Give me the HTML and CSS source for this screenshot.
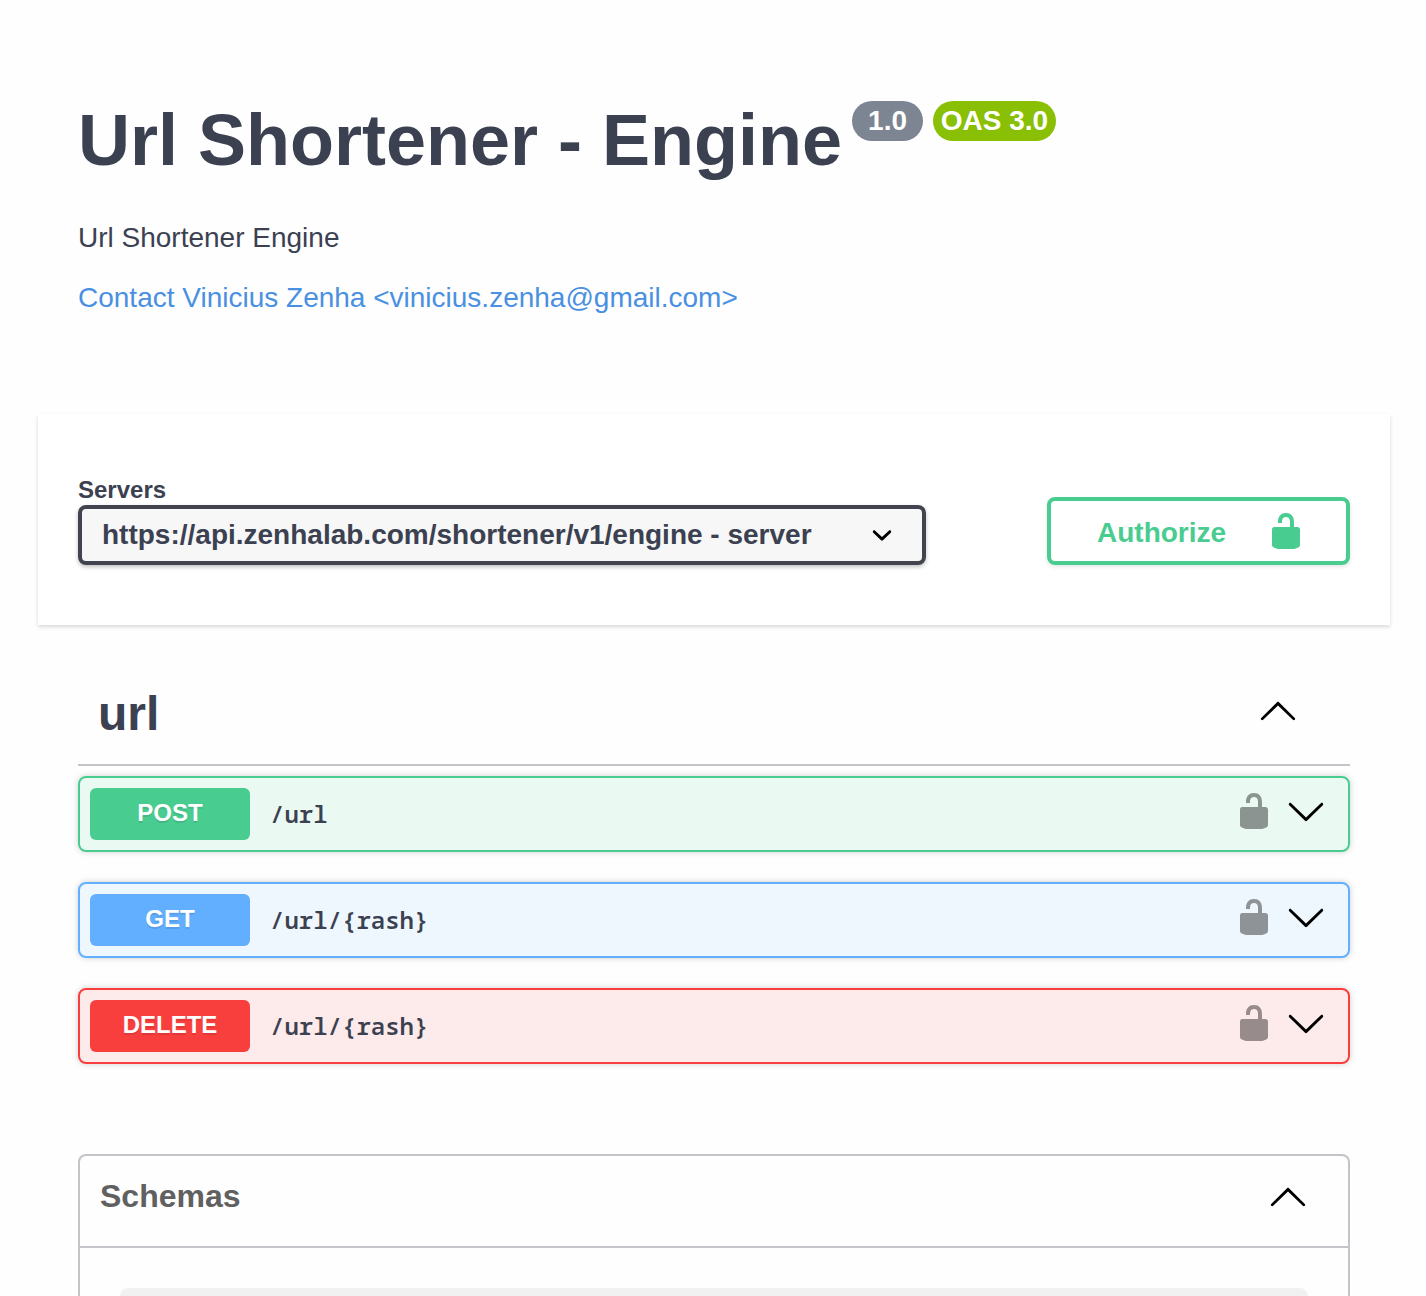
FILE: index.html
```html
<!DOCTYPE html>
<html lang="en">
<head>
<meta charset="utf-8">
<title>Url Shortener - Engine</title>
<link rel="stylesheet" href="styles.css">
</head>
<body>
<svg class="sprite" aria-hidden="true">
  <symbol id="unlocked" viewBox="0 0 20 20"><path d="M15.8 8H14V5.6C14 2.703 12.665 1 10 1 7.334 1 6 2.703 6 5.6V6h2v-.801C8 3.754 8.797 3 10 3c1.203 0 2 .754 2 2.199V8H4c-.553 0-1 .646-1 1.199V17c0 .549.428 1.139.951 1.307l1.197.387C5.672 18.861 6.55 19 7.1 19h5.8c.549 0 1.428-.139 1.951-.307l1.196-.387c.524-.167.953-.757.953-1.306V9.199C17 8.646 16.352 8 15.8 8z"/></symbol>
  <symbol id="arrow-down" viewBox="0 0 20 20"><path d="M17.418 6.109c.272-.268.709-.268.979 0s.271.701 0 .969l-7.908 7.83c-.27.268-.707.268-.979 0l-7.908-7.83c-.27-.268-.27-.701 0-.969.271-.268.709-.268.979 0L10 13.25l7.418-7.141z"/></symbol>
  <symbol id="arrow-up" viewBox="0 0 20 20"><path d="M17.418 14.908c.272.268.709.268.979 0s.271-.701 0-.969l-7.908-7.83c-.27-.268-.707-.268-.979 0l-7.908 7.83c-.27.268-.27.701 0 .969.271.268.709.268.979 0L10 7.767l7.418 7.141z"/></symbol>
  <symbol id="select-arrow" viewBox="0 0 20 20"><path d="M13.418 7.859c.271-.268.709-.268.978 0 .27.268.272.701 0 .969l-3.908 3.83c-.27.268-.707.268-.979 0l-3.908-3.83c-.27-.267-.27-.701 0-.969.271-.268.709-.268.978 0L10 11l3.418-3.141z"/></symbol>
</svg>
<main class="page">
  <header class="info">
    <div class="title-row">
      <h1 class="title">Url Shortener - Engine</h1>
      <span class="badge">1.0</span>
      <span class="badge badge-oas">OAS 3.0</span>
    </div>
    <p class="description">Url Shortener Engine</p>
    <a class="contact">Contact Vinicius Zenha &lt;vinicius.zenha@gmail.com&gt;</a>
  </header>

  <section class="scheme">
    <div class="servers">
      <span class="servers-label">Servers</span>
      <div class="select">
        <span>https://api.zenhalab.com/shortener/v1/engine - server</span>
        <svg class="icon"><use href="#select-arrow"/></svg>
      </div>
    </div>
    <button class="authorize"><span class="authorize-label">Authorize</span><svg class="icon"><use href="#unlocked"/></svg></button>
  </section>

  <section class="operations">
    <div class="tag">
      <h3 class="tag-name">url</h3>
      <svg class="icon"><use href="#arrow-up"/></svg>
    </div>
    <div class="opblock post">
      <span class="method">POST</span>
      <span class="path">/url</span>
      <svg class="icon lock"><use href="#unlocked"/></svg>
      <svg class="icon"><use href="#arrow-down"/></svg>
    </div>
    <div class="opblock get">
      <span class="method">GET</span>
      <span class="path">/url/{rash}</span>
      <svg class="icon lock"><use href="#unlocked"/></svg>
      <svg class="icon"><use href="#arrow-down"/></svg>
    </div>
    <div class="opblock delete">
      <span class="method">DELETE</span>
      <span class="path">/url/{rash}</span>
      <svg class="icon lock"><use href="#unlocked"/></svg>
      <svg class="icon"><use href="#arrow-down"/></svg>
    </div>
  </section>

  <section class="models">
    <div class="models-head">
      <h4 class="models-title">Schemas</h4>
      <svg class="icon"><use href="#arrow-up"/></svg>
    </div>
    <div class="model"></div>
  </section>
</main>
</body>
</html>
```

FILE: styles.css
```css
* {
  box-sizing: border-box;
}

body {
  margin: 0;
  background: #fefefe;
  color: #3b4151;
  font-family: "Liberation Sans", Arial, sans-serif;
}

h1, h3, h4, p {
  margin: 0;
}

.sprite {
  display: none;
}

.icon {
  display: block;
  flex: none;
  width: 40px;
  height: 40px;
}

.page {
  display: flex;
  flex-direction: column;
  height: 1296px;
  padding: 101px 36px 0 38px;
}

.info {
  flex: none;
  height: 313px;
  padding: 0 40px;
}

.title-row {
  display: flex;
  align-items: flex-start;
  height: 82px;
}

.title {
  margin-right: 10px;
  font-size: 72px;
  line-height: 78px;
  white-space: nowrap;
}

.badge {
  height: 40px;
  margin-right: 10px;
  padding: 0 16px;
  border-radius: 20px;
  background: #7d8492;
  color: #fff;
  font-size: 28px;
  font-weight: 700;
  line-height: 40px;
}

.badge-oas {
  padding: 0 8.25px 0 7.75px;
  background: #89bf04;
}

.description {
  margin: 39px 0 28px;
  font-size: 28px;
  line-height: 32px;
}

.contact {
  color: #4990e2;
  font-size: 28px;
  line-height: 32px;
}

.scheme {
  display: flex;
  flex: none;
  align-items: flex-end;
  justify-content: space-between;
  height: 211px;
  padding: 0 40px 60px;
  background: #fff;
  box-shadow: 0 2px 4px rgba(0, 0, 0, .15);
}

.servers {
  display: flex;
  flex-direction: column;
  width: 848px;
}

.servers-label {
  margin-bottom: 1px;
  font-size: 24px;
  font-weight: 700;
  line-height: 28px;
}

.select {
  display: flex;
  align-items: center;
  justify-content: space-between;
  height: 60px;
  padding: 0 20px;
  border: 4px solid #41444e;
  border-radius: 8px;
  background: #f7f7f7;
  box-shadow: 0 2px 4px rgba(0, 0, 0, .25);
  font-size: 28px;
  font-weight: 700;
}

.authorize {
  display: flex;
  align-items: center;
  justify-content: space-between;
  width: 303px;
  height: 68px;
  padding: 0 40px 0 46px;
  border: 4px solid #49cc90;
  border-radius: 8px;
  background: transparent;
  box-shadow: 0 2px 4px rgba(0, 0, 0, .1);
  color: #49cc90;
  fill: #49cc90;
  font: 700 28px/32px "Liberation Sans", Arial, sans-serif;
}

.authorize-label {
  padding-top: 4px;
}

.operations {
  flex: none;
  padding: 51px 40px 0;
}

.tag {
  display: flex;
  justify-content: space-between;
  height: 90px;
  margin-bottom: 10px;
  padding: 14px 52px 0 20px;
  border-bottom: 2px solid rgba(59, 65, 81, .3);
}

.tag-name {
  margin-top: -4px;
  font-size: 48px;
  line-height: 56px;
}

.opblock {
  display: flex;
  align-items: center;
  height: 76px;
  margin-bottom: 30px;
  padding: 0 22px 0 10px;
  border: 2px solid;
  border-radius: 8px;
  box-shadow: 0 0 6px rgba(0, 0, 0, .19);
}

.opblock:last-child {
  margin-bottom: 0;
}

.opblock .icon {
  margin: 0 0 6px 12px;
}

.opblock .lock {
  margin-left: auto;
  opacity: .4;
}

.method {
  width: 160px;
  height: 52px;
  border-radius: 6px;
  color: #fff;
  font-size: 24px;
  font-weight: 700;
  line-height: 50px;
  text-align: center;
  text-shadow: 0 2px 0 rgba(0, 0, 0, .1);
}

.path {
  margin: 0 0 2px 20px;
  font-family: "Noto Sans Mono", "Source Code Pro", "DejaVu Sans Mono", monospace;
  font-size: 24px;
  font-weight: 600;
}

.post {
  border-color: #49cc90;
  background: rgba(73, 204, 144, .1);
}

.post .method {
  background: #49cc90;
}

.get {
  border-color: #61affe;
  background: rgba(97, 175, 254, .1);
}

.get .method {
  background: #61affe;
}

.delete {
  border-color: #f93e3e;
  background: rgba(249, 62, 62, .1);
}

.delete .method {
  background: #f93e3e;
}

.models {
  display: flex;
  flex: 1;
  flex-direction: column;
  min-height: 0;
  margin: 90px 40px 0;
  border: 2px solid rgba(59, 65, 81, .3);
  border-bottom: 0;
  border-radius: 8px 8px 0 0;
}

.models-head {
  display: flex;
  flex: none;
  justify-content: space-between;
  height: 92px;
  padding: 20px 40px 0 20px;
  border-bottom: 2px solid rgba(59, 65, 81, .3);
}

.models-title {
  margin-top: 2px;
  color: #606060;
  font-size: 32px;
  line-height: 36px;
}

.model {
  flex: 1;
  margin: 40px 40px 0;
  border-radius: 8px 8px 0 0;
  background: rgba(0, 0, 0, .05);
}
```
